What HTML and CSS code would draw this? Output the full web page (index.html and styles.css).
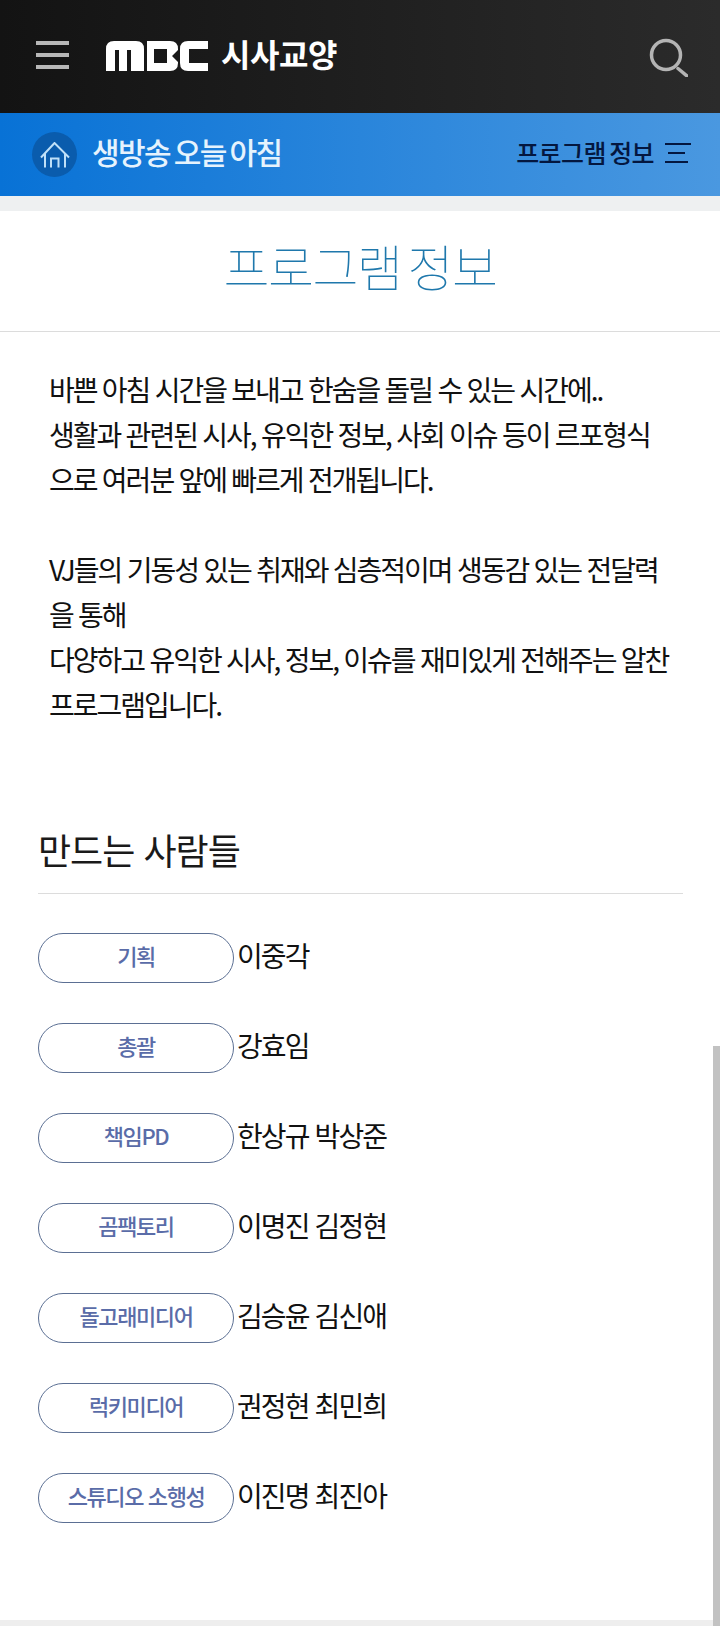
FILE: index.html
```html
<!DOCTYPE html>
<html lang="ko">
<head>
  <meta charset="UTF-8">
  <title>프로그램 정보</title>
  <link rel="stylesheet" href="styles.css">
</head>
<body>
  <header class="topbar">
    <div class="menu-btn"><span></span><span></span><span></span></div>
    <svg class="logo" viewBox="0 0 102 30" width="102" height="30">
      <path fill="#fff" d="M0 30V8Q0 0 8 0H30Q38 0 38 8V30H25V9H21V30H13V9H9V30Z"/>
      <path fill="#fff" fill-rule="evenodd" d="M41 0H64Q72 0 72 8V9L66 15L72 21V22Q72 30 64 30H41ZM48 8V22H61V8Z"/>
      <path fill="#fff" d="M102 0V8H83V22H102V30H82Q74 30 74 22V8Q74 0 82 0Z"/>
    </svg>
    <span class="site-name">시사교양</span>
    <svg class="search" viewBox="0 0 40 40" width="40" height="40">
      <circle cx="18" cy="18" r="14.5" fill="none" stroke="#b4b4b4" stroke-width="3.5"/>
      <path d="M30 31.5L39 39" stroke="#b4b4b4" stroke-width="3.5" stroke-linecap="round"/>
    </svg>
  </header>

  <nav class="subbar">
    <div class="home">
      <svg viewBox="0 0 30 26" width="30" height="26">
        <path d="M1 15.5L14.5 1L29 15.5M5 11V25.5M25 11V25.5M11 25.5V16.5H18.5V25.5" fill="none" stroke="#bfe0f8" stroke-width="2"/>
      </svg>
    </div>
    <span class="prog-name">생방송 오늘 아침</span>
    <span class="prog-info">프로그램 정보</span>
    <div class="info-icon"><span></span><span></span><span></span></div>
  </nav>

  <div class="gap"></div>

  <main class="content">
    <h1 class="page-title"><span>프로그램 정보</span></h1>

    <p class="intro">바쁜 아침 시간을 보내고 한숨을 돌릴 수 있는 시간에..<br>
    생활과 관련된 시사, 유익한 정보, 사회 이슈 등이 르포형식으로 여러분 앞에 빠르게 전개됩니다.<br><br>
    VJ들의 기동성 있는 취재와 심층적이며 생동감 있는 전달력을 통해<br>
    다양하고 유익한 시사, 정보, 이슈를 재미있게 전해주는 알찬 프로그램입니다.</p>

    <section class="staff">
      <h2>만드는 사람들</h2>
      <ul class="staff-list">
        <li><span class="role">기획</span><span class="names">이중각</span></li>
        <li><span class="role">총괄</span><span class="names">강효임</span></li>
        <li><span class="role">책임PD</span><span class="names">한상규 박상준</span></li>
        <li><span class="role">곰팩토리</span><span class="names">이명진 김정현</span></li>
        <li><span class="role">돌고래미디어</span><span class="names">김승윤 김신애</span></li>
        <li><span class="role">럭키미디어</span><span class="names">권정현 최민희</span></li>
        <li><span class="role">스튜디오 소행성</span><span class="names">이진명 최진아</span></li>
      </ul>
    </section>
  </main>

  <div class="bottom"></div>
  <div class="scrollbar"></div>
</body>
</html>
```

FILE: styles.css
```css
* {
  box-sizing: border-box;
}

html, body {
  height: 1626px;
  overflow: hidden;
}

body {
  margin: 0;
  position: relative;
  background: #fff;
  color: #111;
  font-family: "Noto Sans CJK KR", "Noto Sans", sans-serif;
}

/* top */
.topbar {
  height: 113px;
  display: flex;
  align-items: center;
  padding: 0 32px 0 36px;
  background: linear-gradient(to right, #131313, #2b2b2b);
}

.menu-btn {
  width: 33px;
  height: 28px;
  display: flex;
  flex-direction: column;
  justify-content: space-between;
  margin-right: 37px;
  margin-bottom: 3px;
}

.menu-btn span {
  height: 4px;
  background: #b8b8b8;
}

.logo {
  margin-right: 13px;
  margin-bottom: 1px;
}

.site-name {
  color: #fff;
  font-size: 32px;
  font-weight: 700;
  letter-spacing: -0.4px;
  line-height: 1;
  padding-bottom: 7px;
}

.search {
  margin-left: auto;
}

/* blue bar */
.subbar {
  height: 83px;
  display: flex;
  align-items: center;
  padding: 0 29px 0 32px;
  background: linear-gradient(to right, #0872d6, #4a98e0);
}

.home {
  width: 45px;
  height: 45px;
  border-radius: 50%;
  background: #0a5cad;
  display: flex;
  align-items: center;
  justify-content: center;
  margin-right: 15px;
}

.prog-name {
  color: #e6f3fd;
  font-size: 30px;
  font-weight: 500;
  letter-spacing: -1.6px;
  word-spacing: -3px;
  line-height: 44px;
  padding-bottom: 7px;
}

.prog-info {
  margin-left: auto;
  margin-right: 11px;
  color: #04173f;
  font-size: 25px;
  font-weight: 500;
  letter-spacing: -0.6px;
  word-spacing: -3px;
  line-height: 36px;
  padding-bottom: 6px;
}

.info-icon {
  width: 26px;
  height: 20px;
  display: flex;
  flex-direction: column;
  justify-content: space-between;
  align-items: flex-start;
  margin-bottom: 3px;
}

.info-icon span {
  height: 2px;
  width: 26px;
  background: #04173f;
}

.info-icon span:nth-child(2) {
  width: 17px;
  margin-left: 3px;
}

.info-icon span:nth-child(3) {
  width: 23px;
}

.gap {
  height: 15px;
  background: #eef0f1;
}

/* content */
.page-title {
  margin: 0;
  height: 121px;
  display: flex;
  align-items: center;
  justify-content: center;
  border-bottom: 1px solid #dcdcdc;
  color: #1f78ac;
  font-size: 50px;
  font-weight: 100;
  letter-spacing: -1.6px;
  word-spacing: -6px;
}

.page-title span {
  padding-bottom: 12px;
}

.intro {
  margin: 0;
  padding: 35px 48px 0 49px;
  font-size: 28px;
  line-height: 45px;
  letter-spacing: -2px;
  word-spacing: -0.5px;
  font-weight: 400;
  word-break: break-all;
  color: #111;
}

.staff {
  padding: 0 37px 0 38px;
  margin-top: 95px;
}

.staff h2 {
  margin: 0;
  padding-bottom: 17px;
  border-bottom: 1px solid #dcdcdc;
  font-size: 36px;
  font-weight: 400;
  letter-spacing: -1px;
  line-height: 54px;
  color: #1a1a1a;
}

.staff-list {
  list-style: none;
  margin: 39px 0 0;
  padding: 0;
  display: flex;
  flex-direction: column;
  gap: 40px;
}

.staff-list li {
  display: flex;
  align-items: center;
  gap: 3px;
}

.role {
  width: 196px;
  height: 50px;
  border: 1px solid #5b6f93;
  border-radius: 25px;
  display: flex;
  align-items: center;
  justify-content: center;
  padding-bottom: 7px;
  color: #5a6ca8;
  font-size: 22px;
  font-weight: 500;
  letter-spacing: -1.4px;
}

.names {
  font-size: 28px;
  letter-spacing: -1.9px;
  padding-bottom: 6px;
}

.bottom {
  position: absolute;
  left: 0;
  right: 0;
  bottom: 0;
  height: 6px;
  background: #eeeeee;
}

.scrollbar {
  position: absolute;
  top: 1046px;
  right: 0;
  bottom: 0;
  width: 7px;
  background: #c2c2c2;
}
```
